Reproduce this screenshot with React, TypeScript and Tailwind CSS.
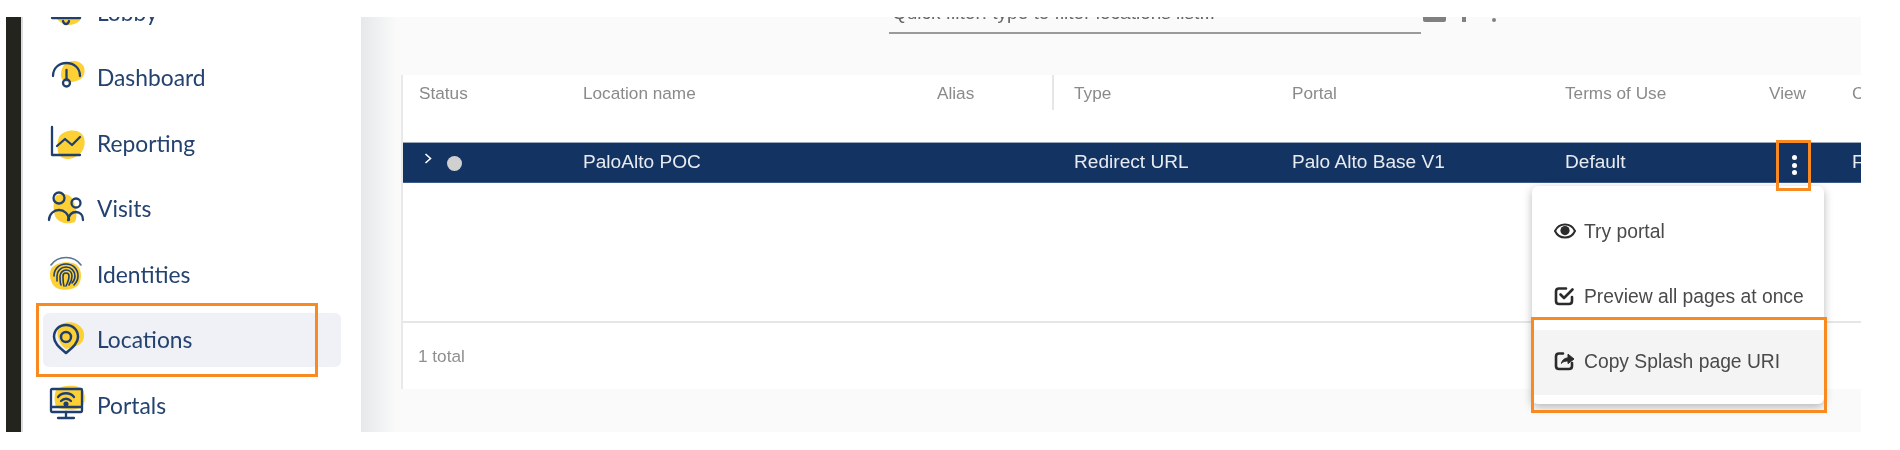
import React from "react";

const navy = "#1f3f70";
const yellow = "#fdd035";

function Svg({ children }: { children: React.ReactNode }) {
  return (
    <svg width="36" height="36" viewBox="0 0 36 36" fill="none" stroke={navy} strokeWidth="2.3" strokeLinecap="round" strokeLinejoin="round" className="shrink-0 overflow-visible">
      {children}
    </svg>
  );
}

const Blob = ({ d }: { d: string }) => <path d={d} fill={yellow} stroke="none" />;

const LobbyIcon = () => (
  <Svg>
    <Blob d="M5 20C10 17 26 16 32 19C33 25 28 30 20 31C12 31 7 27 5 20Z" />
    <path d="M2 24H30" />
    <path d="M13 27C14 31 18 31 19 27" />
  </Svg>
);
const DashboardIcon = () => (
  <Svg>
    <Blob d="M15 4C21 -1 31 0 34 7C36 13 33 20 26 21C19 24 11 22 11 15C11 10 12 7 15 4Z" />
    <path d="M3 16C3 8 9 3 16.5 3S30 8 30 16" />
    <path d="M16.5 10V19" />
    <circle cx="16.5" cy="23" r="3.5" />
  </Svg>
);
const ReportingIcon = () => (
  <Svg>
    <Blob d="M9 12C13 5 26 3 32 9C37 15 35 27 27 31C20 36 10 35 8 27C7 22 7 17 9 12Z" />
    <path d="M2 2V30H30" />
    <path d="M7 21L15 14L22 20L30 12" />
  </Svg>
);
const VisitsIcon = () => (
  <Svg>
    <Blob d="M6 5C12 1 22 3 24 11C26 18 28 25 25 31C18 34 8 32 5 25C3 18 3 10 6 5Z" />
    <circle cx="9" cy="7" r="5.5" />
    <path d="M-1 29C-1 23 4 19 9 19C14 19 19 23 19 29" />
    <circle cx="26" cy="12" r="4.5" />
    <path d="M18 29C19 24 22 21 26 21C30 21 33 24 33 29" />
  </Svg>
);
const IdentitiesIcon = () => (
  <Svg>
    <Blob d="M1 13C5 6 20 4 27 9C33 15 32 27 26 31C19 35 8 35 3 29C0 24 -1 18 1 13Z" />
    <g strokeWidth="1.6">
      <path d="M1 9C8 -1 24 -1 31 9" stroke="#5a7196" />
      <path d="M4 20C4 13 9 8 16 8C23 8 28 13 28 20C28 24 26 27 24 29" />
      <path d="M7 25C7 24 7 22 7 20C7 15 11 11 16 11C21 11 25 15 25 20C25 23 24 25 22 27" />
      <path d="M11 29C10 27 10 24 10 20C10 17 13 14 16 14C20 14 22 17 22 20C22 23 21 26 19 29" />
      <path d="M14 30C13 27 13 23 13 20C13 18 14 17 16 17C18 17 19 18 19 20C19 23 18 26 16 30" />
    </g>
  </Svg>
);
const LocationsIcon = () => (
  <Svg>
    <Blob d="M10 3C17 -2 29 0 33 8C36 15 33 22 26 24L16 27C8 22 5 9 10 3Z" />
    <path d="M16 31C9 25 4 21 4 15C4 8 9 3 16 3C23 3 28 8 28 15C28 21 23 25 16 31Z" strokeWidth="2.5" />
    <circle cx="16" cy="15" r="5" strokeWidth="2.5" />
  </Svg>
);
const PortalsIcon = () => (
  <Svg>
    <Blob d="M6 3C12 -2 28 -3 33 3C36 9 35 18 31 21C24 24 12 23 6 20C4 14 4 8 6 3Z" />
    <rect x="1" y="2" width="31" height="23" rx="1" />
    <path d="M1 20H32" />
    <path d="M16 25V31M8 31H24" />
    <path d="M8 10C12 5 20 5 24 10" />
    <path d="M11 14C14 11 18 11 21 14" />
    <circle cx="16" cy="17" r="1.4" fill={navy} />
  </Svg>
);

const navItems: { label: string; icon: React.ReactNode; active?: boolean }[] = [
  { label: "Lobby", icon: <LobbyIcon /> },
  { label: "Dashboard", icon: <DashboardIcon /> },
  { label: "Reporting", icon: <ReportingIcon /> },
  { label: "Visits", icon: <VisitsIcon /> },
  { label: "Identities", icon: <IdentitiesIcon /> },
  { label: "Locations", icon: <LocationsIcon />, active: true },
  { label: "Portals", icon: <PortalsIcon /> },
];

const gridCols = "grid grid-cols-[180px_354px_137px_218px_273px_204px_83px_200px]";

const EyeIcon = () => (
  <svg width="22" height="16" viewBox="0 0 22 16" className="-mt-[4px] shrink-0">
    <path d="M11 1.5C6 1.5 2.6 4.6 1 8C2.6 11.4 6 14.5 11 14.5S19.4 11.4 21 8C19.4 4.6 16 1.5 11 1.5Z" fill="none" stroke="#2b2b2b" strokeWidth="2" />
    <circle cx="11" cy="7.6" r="4.6" fill="#2b2b2b" />
  </svg>
);
const CheckIcon = () => (
  <svg width="22" height="20" viewBox="0 0 22 20" fill="none" stroke="#2b2b2b" strokeWidth="2.6" strokeLinecap="round" strokeLinejoin="round" className="-mt-[3px] shrink-0">
    <path d="M12 2.5H5C3.3 2.5 2 3.8 2 5.5V15C2 16.7 3.3 18 5 18H15C16.7 18 18 16.7 18 15V11" />
    <path d="M6.5 8.5L10 12L18.5 3.5" />
  </svg>
);
const ShareIcon = () => (
  <svg width="22" height="20" viewBox="0 0 22 20" fill="none" stroke="#2b2b2b" strokeWidth="2.6" strokeLinecap="round" strokeLinejoin="round" className="-mt-[3px] shrink-0">
    <path d="M9 2.5H5C3.3 2.5 2 3.8 2 5.5V15C2 16.7 3.3 18 5 18H15C16.7 18 18 16.7 18 15V12" />
    <path d="M7.5 12C8.5 8.5 11 7 14 7V3.2L20 8L14 12.6V10C11.5 10 9 10.6 7.5 12Z" fill="#2b2b2b" strokeWidth="1" />
  </svg>
);

function MenuRow({ icon, label, active }: { icon: React.ReactNode; label: string; active?: boolean }) {
  return (
    <div className={`flex h-[65px] items-center gap-[8px] pl-[22px] text-[19.3px] text-[#4a4a4a] ${active ? "bg-[#f4f4f4]" : ""}`}>
      {icon}
      <span>{label}</span>
    </div>
  );
}

export default function App() {
  return (
    <div className="h-[450px] w-[1900px] bg-white pb-[18px] pl-[6px] pr-[39px] pt-[17px] blur-[0.6px] font-['Liberation_Sans',Arial,sans-serif]">
      <div className="flex h-[415px] overflow-hidden">
        <div className="w-[15px] shrink-0 bg-[#24241e]" />

        <aside className="flex w-[340px] shrink-0 flex-col bg-white pl-[20px] pr-[20px] font-['Lato',sans-serif] border-l-2 border-[#dddddd]">
          <div className="-mt-[32px] flex flex-col gap-[11.5px]">
            {navItems.map((item) => (
              <div
                key={item.label}
                className={`relative flex h-[54px] items-center gap-[11px] rounded-[6px] pl-[7px] text-[22.8px] text-[#24426f] ${item.active ? "bg-[#eff1f6]" : ""}`}
              >
                {item.icon}
                <span>{item.label}</span>
                {item.active && (
                  <div className="absolute -left-[7px] -top-[10px] h-[74px] w-[282px] border-[3px] border-[#f98a21]" />
                )}
              </div>
            ))}
          </div>
        </aside>

        <main className="relative min-w-0 flex-1 bg-[linear-gradient(90deg,#e7e8eb,#fafafa_36px)]">
          <div className="flex h-[58px] items-start">
            <div className="-mt-[17px] ml-[528px] h-[34px] w-[532px] border-b-2 border-[#9a9a9a] pl-[3px] text-[19px] leading-[26px] text-[#666666]">
              Quick filter: type to filter locations list...
            </div>
            <div className="-mt-[17px] ml-[2px] flex items-center gap-[12px] text-[#808080]">
              <div className="h-[22px] w-[23px] rounded-[2px] border-x-[3px] border-b-[6px] border-t-[3px] border-[#808080]" />
              <svg width="12" height="22" viewBox="0 0 12 22" fill="currentColor"><path d="M4 0H8V22H4ZM0 6L6 0L12 6Z" /></svg>
              <svg width="12" height="22" viewBox="0 0 12 22" fill="currentColor" className="ml-[6px]"><circle cx="6" cy="20" r="2" /></svg>
            </div>
          </div>

          <div className="ml-[40px] h-[314px] overflow-hidden border-l-2 border-[#e9e9e9] bg-white">
            <div className={`${gridCols} h-[67px] w-[1700px] pt-[6px] text-[17.2px] leading-[24px] text-[#8a8a8a]`}>
              <div className="pl-[16px]">Status</div>
              <div>Location name</div>
              <div className="relative">
                Alias
                <div className="absolute -top-[6px] left-[115px] h-[35px] w-[2px] bg-[#e6e6e6]" />
              </div>
              <div>Type</div>
              <div>Portal</div>
              <div>Terms of Use</div>
              <div>View</div>
              <div>Created</div>
            </div>

            <div className={`${gridCols} h-[41px] w-[1700px] items-center border-y border-t-[#9aa6ba] border-b-[#3a5a8a] bg-[#133362] text-[19.1px] text-[#e8ebf0]`}>
              <div className="flex items-center pl-[21px]">
                <svg width="8" height="11" viewBox="0 0 8 11" fill="none" stroke="white" strokeWidth="1.6" className="-mt-[9px]"><path d="M1.5 1L6.5 5.5L1.5 10" /></svg>
                <div className="ml-[15px] mt-[2px] h-[15px] w-[15px] rounded-full bg-[#d0d0d0]" />
              </div>
              <div>PaloAlto POC</div>
              <div />
              <div>Redirect URL</div>
              <div>Palo Alto Base V1</div>
              <div>Default</div>
              <div className="relative h-full">
                <div className="absolute left-[23px] top-[12px] flex flex-col gap-[2.5px]">
                  <div className="h-[5px] w-[5px] rounded-full bg-white" />
                  <div className="h-[5px] w-[5px] rounded-full bg-white" />
                  <div className="h-[5px] w-[5px] rounded-full bg-white" />
                </div>
                <div className="absolute left-[7px] -top-[3px] z-10 h-[51px] w-[35px] border-[3px] border-[#f98a21]" />
              </div>
              <div>Free</div>
            </div>

            <div className="h-[140px] border-b-2 border-[#e6e6e6]" />
            <div className="flex h-[64px] items-center pl-[15px] pt-[4px] text-[17.2px] text-[#8f8f8f]">1 total</div>
          </div>

          <div className="absolute left-[1171px] top-[169px] w-[292px] rounded-[6px] bg-white pb-[9px] pt-[14px] shadow-[0_3px_10px_rgba(0,0,0,0.28)]">
            <MenuRow icon={<EyeIcon />} label="Try portal" />
            <MenuRow icon={<CheckIcon />} label="Preview all pages at once" />
            <MenuRow icon={<ShareIcon />} label="Copy Splash page URI" active />
            <div className="absolute -left-[1px] top-[131px] h-[96px] w-[296px] border-[3px] border-[#f98a21]" />
          </div>
        </main>
      </div>
    </div>
  );
}
